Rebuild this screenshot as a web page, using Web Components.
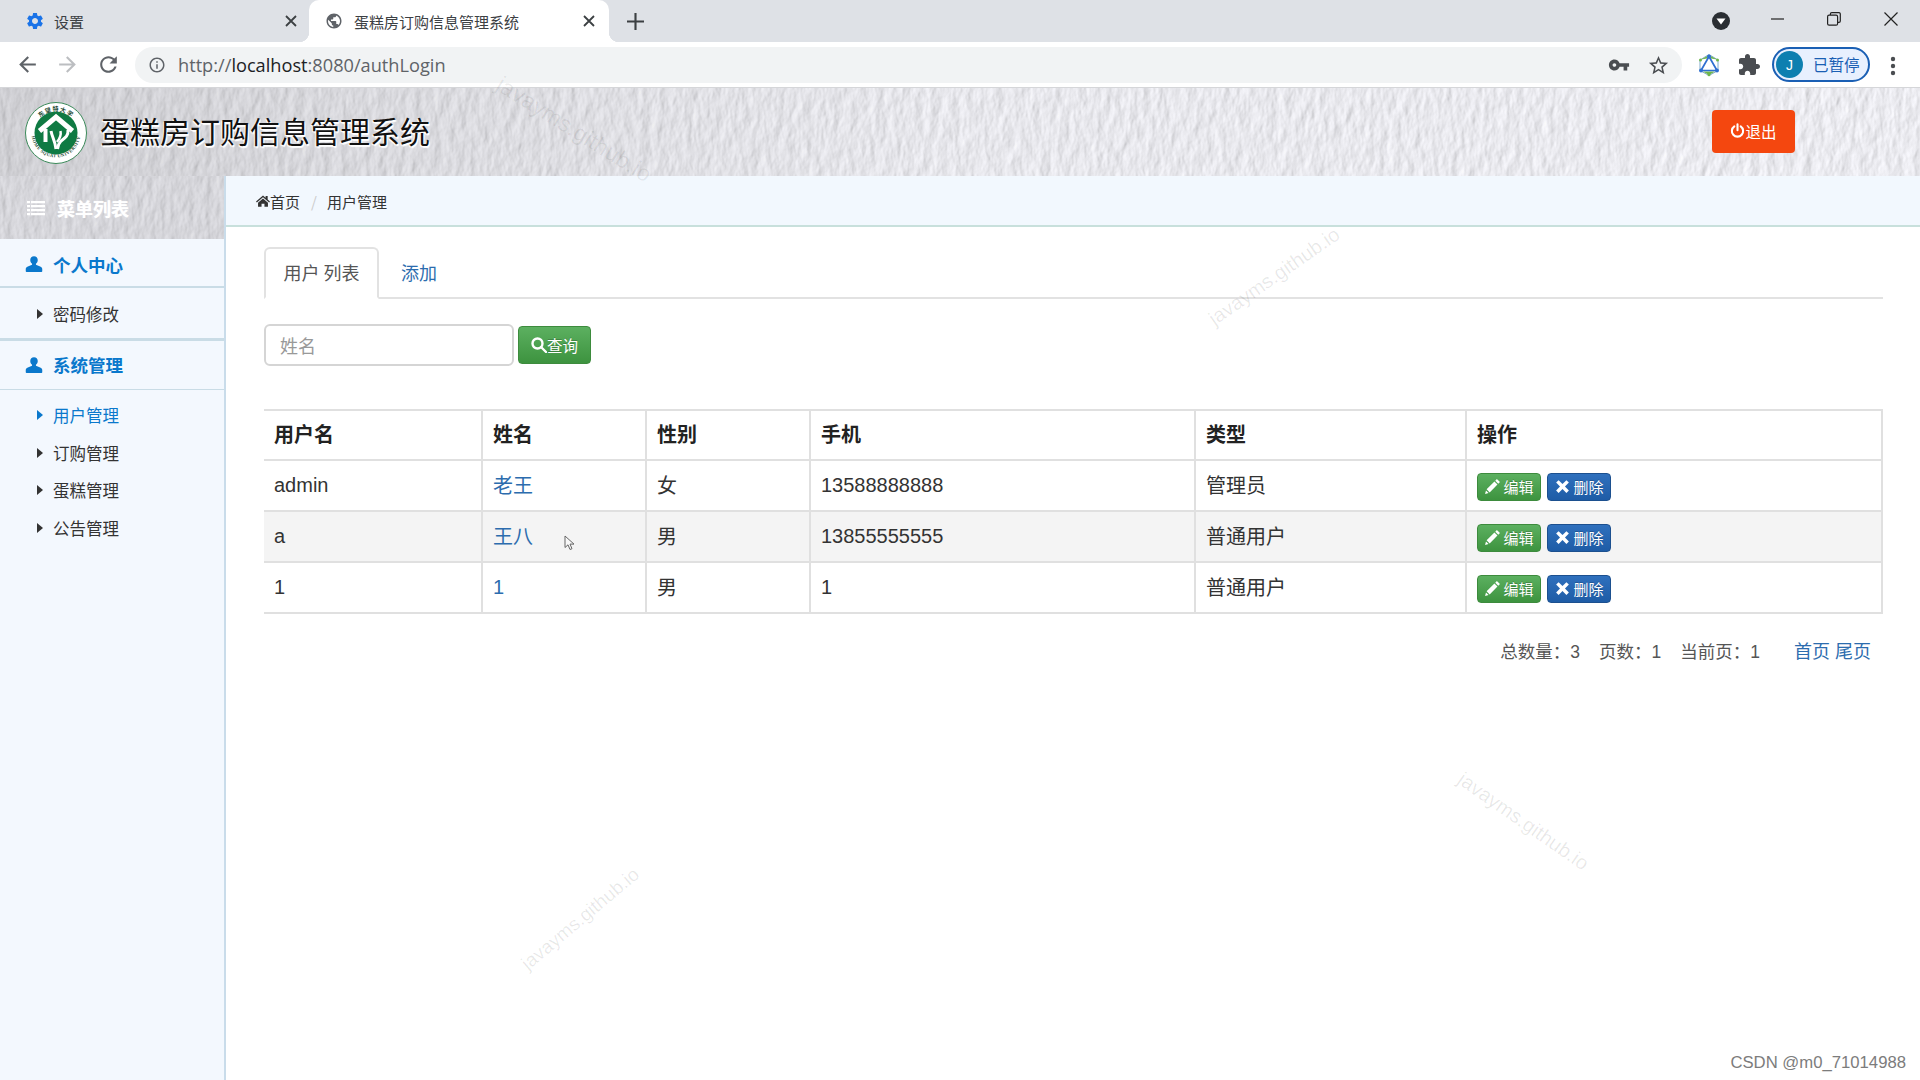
<!DOCTYPE html>
<html lang="zh">
<head>
<meta charset="utf-8">
<title>蛋糕房订购信息管理系统</title>
<style>
  html, body { margin: 0; height: 100%; background: #fff; overflow: hidden; }
  body { font-family: "Liberation Sans", "Noto Sans CJK SC", sans-serif; color: #333; position: relative; }
  .shell { display: flex; flex-direction: column; height: 1080px; }
  .work { display: flex; flex: 1; min-height: 0; }
</style>
</head>
<body>
<div class="shell">
  <browser-chrome></browser-chrome>
  <app-header></app-header>
  <div class="work">
    <app-sidebar>
      <side-group label="个人中心">
        <side-item>密码修改</side-item>
      </side-group>
      <side-group label="系统管理" open>
        <side-item active>用户管理</side-item>
        <side-item>订购管理</side-item>
        <side-item>蛋糕管理</side-item>
        <side-item>公告管理</side-item>
      </side-group>
    </app-sidebar>
    <app-main>
      <bread-crumb slot="crumb"></bread-crumb>
      <nav-tabs></nav-tabs>
      <search-bar></search-bar>
      <user-table>
        <user-row head username="用户名" fullname="姓名" gender="性别" phone="手机" kind="类型" ops="操作"></user-row>
        <user-row username="admin" fullname="老王" gender="女" phone="13588888888" kind="管理员"></user-row>
        <user-row striped username="a" fullname="王八" gender="男" phone="13855555555" kind="普通用户"></user-row>
        <user-row username="1" fullname="1" gender="男" phone="1" kind="普通用户"></user-row>
      </user-table>
      <page-info></page-info>
    </app-main>
  </div>
</div>
<water-mark style="left:485px;top:116px;transform:rotate(32deg);color:rgba(0,0,0,.07);font-size:23px"></water-mark>
<water-mark style="left:1197px;top:265px;transform:rotate(-35deg)"></water-mark>
<water-mark style="left:1446px;top:810px;transform:rotate(35deg)"></water-mark>
<water-mark style="left:507px;top:908px;transform:rotate(-40deg);font-size:19px"></water-mark>
<mouse-cursor></mouse-cursor>
<csdn-mark>CSDN @m0_71014988</csdn-mark>

<script>
(function () {
  const P = {
    back: 'M20 11H7.83l5.59-5.59L12 4l-8 8 8 8 1.41-1.41L7.83 13H20v-2z',
    forward: 'M4 11h12.17l-5.59-5.59L12 4l8 8-8 8-1.41-1.41L16.17 13H4v-2z',
    reload: 'M17.65 6.35C16.2 4.9 14.21 4 12 4c-4.42 0-7.99 3.58-7.99 8s3.57 8 7.99 8c3.73 0 6.84-2.55 7.73-6h-2.08c-.82 2.33-3.04 4-5.65 4-3.31 0-6-2.69-6-6s2.69-6 6-6c1.66 0 3.14.69 4.22 1.78L13 11h7V4l-2.35 2.35z',
    info: 'M11 7h2v2h-2zm0 4h2v6h-2zm1-9C6.48 2 2 6.48 2 12s4.48 10 10 10 10-4.48 10-10S17.52 2 12 2zm0 18c-4.41 0-8-3.59-8-8s3.59-8 8-8 8 3.59 8 8-3.59 8-8 8z',
    key: 'M12.65 10C11.83 7.67 9.61 6 7 6c-3.31 0-6 2.69-6 6s2.69 6 6 6c2.61 0 4.83-1.67 5.65-4H17v4h4v-4h2v-4H12.65zM7 14c-1.1 0-2-.9-2-2s.9-2 2-2 2 .9 2 2-.9 2-2 2z',
    star: 'M22 9.24l-7.19-.62L12 2 9.19 8.63 2 9.24l5.46 4.73L5.82 21 12 17.27 18.18 21l-1.63-7.03L22 9.24zM12 15.4l-3.76 2.27 1-4.28-3.32-2.88 4.38-.38L12 6.1l1.71 4.04 4.38.38-3.32 2.88 1 4.28L12 15.4z',
    puzzle: 'M20.5 11H19V7c0-1.1-.9-2-2-2h-4V3.5C13 2.12 11.88 1 10.5 1S8 2.12 8 3.5V5H4c-1.1 0-1.99.9-1.99 2v3.8H3.5c1.49 0 2.7 1.21 2.7 2.7s-1.21 2.7-2.7 2.7H2V20c0 1.1.9 2 2 2h3.8v-1.5c0-1.49 1.21-2.7 2.7-2.7 1.49 0 2.7 1.21 2.7 2.7V22H17c1.1 0 2-.9 2-2v-4h1.5c1.38 0 2.5-1.12 2.5-2.5S21.88 11 20.5 11z',
    gear: 'M19.14 12.94c.04-.3.06-.61.06-.94 0-.32-.02-.64-.07-.94l2.03-1.58c.18-.14.23-.41.12-.61l-1.92-3.32c-.12-.22-.37-.29-.59-.22l-2.39.96c-.5-.38-1.03-.7-1.62-.94l-.36-2.54c-.04-.24-.24-.41-.48-.41h-3.84c-.24 0-.43.17-.47.41l-.36 2.54c-.59.24-1.13.57-1.62.94l-2.39-.96c-.22-.08-.47 0-.59.22L2.74 8.87c-.12.21-.08.47.12.61l2.03 1.58c-.05.3-.09.63-.09.94s.02.64.07.94l-2.03 1.58c-.18.14-.23.41-.12.61l1.92 3.32c.12.22.37.29.59.22l2.39-.96c.5.38 1.03.7 1.62.94l.36 2.54c.05.24.24.41.48.41h3.84c.24 0 .44-.17.47-.41l.36-2.54c.59-.24 1.13-.56 1.62-.94l2.39.96c.22.08.47 0 .59-.22l1.92-3.32c.12-.22.07-.47-.12-.61l-2.01-1.58zM12 15.6c-1.98 0-3.6-1.62-3.6-3.6s1.62-3.6 3.6-3.6 3.6 1.62 3.6 3.6-1.62 3.6-3.6 3.6z',
    globe: 'M12 2C6.48 2 2 6.48 2 12s4.48 10 10 10 10-4.48 10-10S17.52 2 12 2zm-1 17.93c-3.95-.49-7-3.85-7-7.93 0-.62.08-1.21.21-1.79L9 15v1c0 1.1.9 2 2 2v1.93zm6.9-2.54c-.26-.81-1-1.39-1.9-1.39h-1v-3c0-.55-.45-1-1-1H8v-2h2c.55 0 1-.45 1-1V7h2c1.1 0 2-.9 2-2v-.41c2.93 1.19 5 4.06 5 7.41 0 2.08-.8 3.97-2.1 5.39z',
    user: 'M12 1.500c-3 0-5 2.200-5 5.200 0 2.200 1 4 2.400 5v1.300L3.800 15.300C2.100 16 1 17 1 18.700V21.500c0 .6.500 1 1 1h20c.5 0 1-.4 1-1v-2.800c0-1.700-1.100-2.700-2.800-3.400l-5.600-2.300v-1.300c1.400-1 2.400-2.800 2.400-5 0-3-2-5.200-5-5.200z',
    home: 'M12 2.500 0 13l1.500 1.700L12 5.600l10.500 9.100L24 13l-4-3.500V3.500h-3.500v3L12 2.500zM12 7.500 3.500 14.800V22h6v-5.500h5V22h6v-7.200L12 7.500z',
    pencil: 'M18.200 1.500l4.300 4.300-2.300 2.300-4.300-4.300 2.300-2.300zM14.700 5 19 9.300 8 20.300 3.700 16 14.700 5zM2.800 17.500l3.700 3.700L1.500 22.500l1.300-5z',
    cross: 'M6.500 3 12 8.500 17.500 3 21 6.500 15.500 12 21 17.500 17.500 21 12 15.500 6.500 21 3 17.500 8.500 12 3 6.500z'
  }

  function icon (name, size, color) {
    return `<svg width="${size}" height="${size}" viewBox="0 0 24 24" fill="${color || 'currentColor'}" style="display:block;flex:none"><path d="${P[name]}"/></svg>`
  }

  function define (name, html, init) {
    let template = document.createElement('template')
    template.innerHTML = html
    customElements.define(name, class extends HTMLElement {
      constructor () {
        super()
        this.attachShadow({ mode: 'open' }).appendChild(template.content.cloneNode(true))
      }
      connectedCallback () {
        if (init) init(this, this.shadowRoot)
      }
    })
  }

  define('browser-chrome', `
    <style>
      :host { display: block; flex: none; font-family: "Noto Sans CJK SC", "Liberation Sans", sans-serif; color: #3c4043; }
      .strip { height: 42px; background: #dee1e6; display: flex; align-items: flex-end; position: relative; }
      .tab { height: 42px; box-sizing: border-box; display: flex; align-items: center; font-size: 15px; position: relative; flex: none; }
      .tab.one { width: 309px; padding-left: 25px; }
      .tab.two { width: 300px; padding-left: 16px; background: #fff; border-radius: 10px 10px 0 0; }
      .tab.two::before, .tab.two::after { content: ''; position: absolute; bottom: 0; width: 10px; height: 10px; }
      .tab.two::before { left: -10px; background: radial-gradient(circle at 0 0, #dee1e6 10px, #fff 10.5px); }
      .tab.two::after { right: -10px; background: radial-gradient(circle at 100% 0, #dee1e6 10px, #fff 10.5px); }
      .tab .t { margin-left: 9px; }
      .tab.two .t { margin-left: 11px; }
      .x { position: absolute; right: 14px; top: 15px; }
      .tab.one .x { right: 12px; }
      .plus { margin: 0 0 12px 18px; }
      .bar { height: 46px; background: #fff; display: flex; align-items: center; border-bottom: 1px solid #d5d6d9; box-sizing: border-box; padding-left: 15px; }
      .addr { margin-left: 14px; width: 1547px; height: 36px; background: #f1f3f4; border-radius: 18px; display: flex; align-items: center; box-sizing: border-box; padding-left: 13px; flex: none; position: relative; }
      .url { font: 18.200px "Open Sans", sans-serif; color: #5f6368; margin-left: 12px; }
      .url b { font-weight: 400; color: #202124; }
      .ab { position: absolute; top: 7px; }
      .pill { position: absolute; width: 98px; height: 35px; box-sizing: border-box; border: 2px solid #1a5fb4; border-radius: 18px; background: #e8f0fe; display: flex; align-items: center; padding-left: 2px; color: #1a5fb4; font-size: 15.500px; line-height: 28px; }
      .pill em { font-style: normal; position: relative; top: -1px; }
      .av { width: 27px; height: 27px; border-radius: 50%; background: #0d7fb0; color: #fff; font: 14px "Liberation Sans", sans-serif; display: flex; align-items: center; justify-content: center; margin-right: 10px; }
      .tool { position: absolute; }
      .rel { position: relative; }
    </style>
    <div class="strip">
      <div class="tab one">${icon('gear', 20, '#1a73e8')}<span class="t">设置</span>
        <svg class="x" width="12" height="12" viewBox="0 0 12 12" stroke="#3c4043" stroke-width="1.800"><path d="M1 1l10 10M11 1 1 11"/></svg>
      </div>
      <div class="tab two">${icon('globe', 18, '#5f6368')}<span class="t">蛋糕房订购信息管理系统</span>
        <svg class="x" width="12" height="12" viewBox="0 0 12 12" stroke="#3c4043" stroke-width="1.800"><path d="M1 1l10 10M11 1 1 11"/></svg>
      </div>
      <svg class="plus" width="17" height="17" viewBox="0 0 16 16" stroke="#3c4043" stroke-width="2"><path d="M8 0v16M0 8h16"/></svg>
      <svg class="tool" style="left:1712px;top:12px" width="18" height="18" viewBox="0 0 18 18"><circle cx="9" cy="9" r="9" fill="#2a2e33"/><path d="M4.500 6.500h9L9 12.500z" fill="#fff"/></svg>
      <svg class="tool" style="left:1771px;top:18px" width="13" height="2" viewBox="0 0 13 2"><path d="M0 1h13" stroke="#222" stroke-width="1.200"/></svg>
      <svg class="tool" style="left:1827px;top:12px" width="14" height="14" viewBox="0 0 14 14" fill="none" stroke="#222" stroke-width="1.200"><rect x=".6" y="3.200" width="10" height="10" rx="1.500"/><path d="M3.400 3V2A1.400 1.400 0 0 1 4.800.6h7A1.400 1.400 0 0 1 13.300 2v7a1.400 1.400 0 0 1-1.400 1.400H11"/></svg>
      <svg class="tool" style="left:1884px;top:12px" width="14" height="14" viewBox="0 0 14 14" stroke="#222" stroke-width="1.200"><path d="M.5.500l13 13M13.500.500l-13 13"/></svg>
    </div>
    <div class="bar rel">
      ${icon('back', 25, '#5f6368')}
      <span style="width:15px"></span>${icon('forward', 25, '#bcbec1')}
      <span style="width:16px"></span>${icon('reload', 25, '#5f6368')}
      <div class="addr">
        ${icon('info', 18, '#5f6368')}
        <span class="url">http://<b>localhost</b>:8080/authLogin</span>
        <span class="ab" style="left:1473px">${icon('key', 22, '#4a4d51')}</span>
        <span class="ab" style="left:1512px">${icon('star', 23, '#4a4d51')}</span>
      </div>
      <svg class="tool" style="left:1697px;top:11px" width="24" height="24" viewBox="0 0 24 24" fill="none">
        <path d="M12 1.500 21 7v10.500L12 22.500 3 17.500V7z" stroke="#7faacb" stroke-width="1"/>
        <path d="M4 6.500 12 2 10 5.500zM20 6.500 12 2l2 3.500zM6 18.500l6 3.500 6-3.500z" fill="#6fb64a"/>
        <path d="M12 3.500 20 17.500H4z" stroke="#2f6fd0" stroke-width="1.700"/>
        <circle cx="12" cy="3.500" r="2" fill="#2f6fd0"/><circle cx="3.500" cy="7" r="1.500" fill="#6fb64a"/><circle cx="20.500" cy="7" r="1.500" fill="#6fb64a"/><circle cx="4" cy="17.500" r="1.900" fill="#2f6fd0"/><circle cx="20" cy="17.500" r="1.900" fill="#2f6fd0"/><circle cx="12" cy="21.800" r="1.500" fill="#6fb64a"/>
      </svg>
      <span class="tool" style="left:1737px;top:11px">${icon('puzzle', 24, '#4a4d51')}</span>
      <span class="tool" style="left:1772px;top:5px;width:98px;height:35px;">
        <span class="pill"><span class="av">J</span><em>已暂停</em></span>
      </span>
      <svg class="tool" style="left:1889px;top:14px" width="8" height="20" viewBox="0 0 8 20" fill="#4a4d51"><circle cx="4" cy="3" r="2.200"/><circle cx="4" cy="10" r="2.200"/><circle cx="4" cy="17" r="2.200"/></svg>
    </div>
  `)

  define('paper-texture', `
    <style>
      :host { position: absolute; inset: 0; display: block; overflow: hidden; z-index: 0; }
      svg { display: block; width: 100%; height: 100%; }
      .shade { position: absolute; inset: 0; }
    </style>
    <svg aria-hidden="true">
      <filter id="paper" x="0" y="0" width="100%" height="100%" color-interpolation-filters="sRGB">
        <feTurbulence type="fractalNoise" baseFrequency=".11 .055" numOctaves="4" seed="7"/>
        <feDiffuseLighting surfaceScale=".75" lighting-color="#ececf1" diffuseConstant="1.100">
          <feDistantLight azimuth="200" elevation="66"/>
        </feDiffuseLighting>
      </filter>
      <rect width="100%" height="100%" filter="url(#paper)"/>
    </svg>
    <div class="shade"></div>
  `, (el, root) => {
    root.querySelector('.shade').style.background = el.getAttribute('shade') || 'none'
  })

  define('app-header', `
    <style>
      :host { display: flex; flex: none; height: 88px; align-items: center; position: relative; }
      .logo { position: relative; z-index: 1; margin: 2px 0 0 25px; display: block; flex: none; }
      h1 { position: relative; z-index: 1; margin: 0 0 4px 13px; font: 400 30px/1 "Noto Sans CJK SC", sans-serif; color: #111; text-shadow: 1px 1px 1px #fff, -1px 1px 1px #fff, 1px 2px 1px #fff; }
      .quit { position: absolute; z-index: 1; left: 1712px; top: 22px; width: 83px; height: 43px; padding-bottom: 2px; box-sizing: border-box; background: #f4470f; border-radius: 4px; color: #fff; display: flex; align-items: center; justify-content: center; font: 15.500px "Noto Sans CJK SC", sans-serif; }
    </style>
    <paper-texture shade="linear-gradient(90deg, rgba(120,120,122,.26), rgba(120,120,122,.15) 25%, rgba(120,120,122,.05) 50%, rgba(120,120,122,.02) 100%)"></paper-texture>
    <svg class="logo" width="62" height="62" viewBox="0 0 62 62">
      <circle cx="31" cy="31" r="30.500" fill="#fff" stroke="#3b8a5a"/>
      <circle cx="31" cy="31" r="21.500" fill="#0f7a43"/>
      <g fill="none" stroke="#fff" stroke-linejoin="miter">
        <path d="M14.500 29 31 15l16.500 14" stroke-width="5"/>
        <path d="M20.500 27v13" stroke-width="4"/>
        <path d="M26 29c1 6 4 9 5 18" stroke-width="3"/>
        <path d="M35.500 29c1 5-1 8-3.500 11" stroke-width="2.500"/>
        <path d="M43 28c.5 6-3 8-7 11-2 2-3 4-3.500 8" stroke-width="3"/>
      </g>
      <defs>
        <path id="bt" d="M6.500 31a24.500 24.500 0 0 0 49 0"/>
        <path id="tp" d="M9 27a22.500 22.500 0 0 1 44 0"/>
      </defs>
      <text font-size="4.600" font-family="Liberation Serif, serif" font-weight="700" fill="#1d4a33" letter-spacing=".4"><textPath href="#bt" startOffset="50%" text-anchor="middle">HOME SQUAT UNIVERSITY</textPath></text>
      <text font-size="6" font-family="Noto Sans CJK SC, sans-serif" font-weight="700" fill="#1d4a33" letter-spacing="1"><textPath href="#tp" startOffset="50%" text-anchor="middle">东望特大学</textPath></text>
    </svg>
    <h1>蛋糕房订购信息管理系统</h1>
    <div class="quit">
      <svg width="15" height="15" viewBox="0 0 16 16" fill="none" stroke="#fff" stroke-width="2.200" stroke-linecap="round"><path d="M4.600 3.600a6 6 0 1 0 6.800 0M8 1.300v6.500"/></svg>退出
    </div>
  `)

  define('app-sidebar', `
    <style>
      :host { display: block; flex: none; width: 226px; box-sizing: border-box; border-right: 2px solid #c9dcea; background: #f3f8fe; }
      .head { height: 63px; position: relative; display: flex; align-items: center; padding-left: 27px; color: #fff; font: 700 18px "Noto Sans CJK SC", sans-serif; text-shadow: 0 0 1px rgba(255,255,255,.7); }
      .head > span, .head > svg { position: relative; z-index: 1; }
      .head svg { margin-right: 12px; }
    </style>
    <div class="head">
      <paper-texture shade="linear-gradient(rgba(120,120,124,.2), rgba(120,120,124,.2))"></paper-texture>
      <svg width="18" height="16" viewBox="0 0 18 16" fill="#fff"><path d="M0 1h3v2.200H0zM4 1h14v2.200H4zM0 5h3v2.200H0zM4 5h14v2.200H4zM0 9h3v2.200H0zM4 9h14v2.200H4zM0 13h3v2.200H0zM4 13h14v2.200H4z"/></svg>
      <span>菜单列表</span>
    </div>
    <slot></slot>
  `)

  define('side-group', `
    <style>
      :host { display: block; font-family: "Noto Sans CJK SC", sans-serif; }
      .title { height: 49px; box-sizing: border-box; padding-top: 3px; border-bottom: 2px solid #c9dce6; display: flex; align-items: center; padding-left: 26px; color: #0a78cc; font-size: 17.500px; font-weight: 700; }
      .title svg { margin: 0 10px 0 -1px; }
      .items { display: block; padding: 7.500px 0 4.500px; box-sizing: border-box; border-bottom: 3px solid #c9dce6; }
      :host([open]) .items { border-bottom: 0; padding-top: 7px; }
      :host([open]) .title { border-bottom-width: 1px; padding-top: 0; }
    </style>
    <div class="title">${icon('user', 18)}<span class="label"></span></div>
    <div class="items"><slot></slot></div>
  `, (el, root) => {
    root.querySelector('.label').textContent = el.getAttribute('label')
  })

  define('side-item', `
    <style>
      :host { display: flex; align-items: center; height: 37.500px; padding-left: 37px; font-size: 16.500px; color: #333; }
      :host([active]) { color: #0a78cc; }
      i { width: 0; height: 0; border-left: 6px solid currentColor; border-top: 5.500px solid transparent; border-bottom: 5.500px solid transparent; margin-right: 10px; }
    </style>
    <i></i><slot></slot>
  `)

  define('app-main', `
    <style>
      :host { display: block; flex: 1; min-width: 0; background: #fff; font-family: "Liberation Sans", "Noto Sans CJK SC", sans-serif; }
      .body { padding: 20px 37px 0 38px; }
    </style>
    <slot name="crumb"></slot>
    <div class="body"><slot></slot></div>
  `)

  define('bread-crumb', `
    <style>
      :host { display: flex; align-items: center; height: 51px; box-sizing: border-box; padding: 1px 0 0 30px; background: #f2f8fe; border-bottom: 2px solid #c8e0dc; font: 15px "Noto Sans CJK SC", sans-serif; color: #333; }
      .sep { color: #ccc; margin: 0 10px 0 11px; }
    </style>
    ${icon('home', 14)}<span>首页</span><span class="sep">/</span><span>用户管理</span>
  `)

  define('nav-tabs', `
    <style>
      :host { display: flex; height: 52px; box-sizing: border-box; border-bottom: 2px solid #e2e2e2; font: 18px "Noto Sans CJK SC", sans-serif; }
      div { box-sizing: border-box; height: 52px; display: flex; align-items: center; padding-bottom: 2px; }
      .on { width: 115px; justify-content: center; border: 2px solid #e2e2e2; border-bottom: 2px solid #fff; border-radius: 6px 6px 0 0; color: #555; white-space: pre; }
      .off { margin-left: 22px; color: #2c6cae; }
    </style>
    <div class="on">用户 列表</div><div class="off">添加</div>
  `)

  define('search-bar', `
    <style>
      :host { display: flex; align-items: center; margin-top: 25px; height: 42px; font-family: "Noto Sans CJK SC", sans-serif; }
      input { box-sizing: border-box; width: 250px; height: 42px; padding: 0 14px; border: 2px solid #d5d5d5; border-radius: 6px; font: 18px "Noto Sans CJK SC", sans-serif; outline: 0; }
      input::placeholder { color: #999; opacity: 1; }
      .go { margin-left: 4px; width: 73px; height: 38px; box-sizing: border-box; border: 1px solid #3d8b3d; border-radius: 4px; background: linear-gradient(#5cb060, #3d933f); color: #fff; display: flex; align-items: center; justify-content: center; font-size: 15.500px; text-shadow: 0 -1px 0 rgba(0,0,0,.2); }
    </style>
    <input placeholder="姓名">
    <div class="go">
      <svg width="16" height="16" viewBox="0 0 16 16" fill="none" stroke="#fff" stroke-width="2.400"><circle cx="6.500" cy="6.500" r="5"/><path d="M10 10l5 5" stroke-linecap="round"/></svg>查询
    </div>
  `)

  define('user-table', `
    <style>
      :host { display: block; margin-top: 43px; border-top: 2px solid #e0e0e0; }
    </style>
    <slot></slot>
  `)

  define('user-row', `
    <style>
      :host { display: grid; grid-template-columns: 219px 164px 164px 385px 271px 416px; height: 51px; font-size: 20px; color: #333; }
      :host([head]) { height: 50px; font-weight: 700; color: #222; }
      :host([striped]) { background: #f4f4f4; }
      .c { box-sizing: border-box; border-right: 2px solid #e0e0e0; border-bottom: 2px solid #e0e0e0; padding-left: 10px; display: flex; align-items: center; white-space: nowrap; }
      .c:first-child { border-left: 2px solid #e0e0e0; padding-left: 10px; }
      .c.cjk { padding-bottom: 3px; }
      .c.link { color: #2c6cae; }
      .b { width: 64px; height: 28px; box-sizing: border-box; border-radius: 4px; color: #fff; font: 15px "Noto Sans CJK SC", sans-serif; display: inline-flex; align-items: center; justify-content: center; gap: 2px; margin: 2px 6px 0 0; text-shadow: 0 -1px 0 rgba(0,0,0,.2); }
      .g { background: linear-gradient(#5cb060, #3d933f); border: 1px solid #3d8b3d; }
      .p { background: linear-gradient(#2f70bd, #1e5ca6); border: 1px solid #1c508f; }
    </style>
  `, (el, root) => {
    const head = el.hasAttribute('head')
    const a = n => el.getAttribute(n)
    const cjk = s => /[^\x00-\x7f]/.test(s) ? 'cjk' : ''
    let ops = head ? a('ops') : `<span class="b g">${icon('pencil', 17)}编辑</span><span class="b p">${icon('cross', 17)}删除</span>`
    let wrap = document.createElement('template')
    wrap.innerHTML = `
      <div class="c ${cjk(a('username'))}">${a('username')}</div>
      <div class="c ${head ? '' : 'link'} ${cjk(a('fullname'))}">${a('fullname')}</div>
      <div class="c cjk">${a('gender')}</div>
      <div class="c ${cjk(a('phone'))}">${a('phone')}</div>
      <div class="c cjk">${a('kind')}</div>
      <div class="c ${head ? 'cjk' : ''}">${ops}</div>`
    root.appendChild(wrap.content)
  })

  define('page-info', `
    <style>
      :host { display: flex; justify-content: flex-end; align-items: center; height: 24px; margin-top: 24px; padding-right: 12px; font: 17.500px "Liberation Sans", "Noto Sans CJK SC", sans-serif; color: #555; white-space: pre; }
      span { margin-right: 19px; }
      a { color: #2c6cae; font-size: 18px; }
      .l { margin-left: 15px; }
    </style>
    <span>总数量：3</span><span>页数：1</span><span>当前页：1</span><a class="l">首页 尾页</a>
  `)

  define('water-mark', `
    <style>
      :host { position: absolute; display: block; font: 20px "Liberation Sans", sans-serif; color: rgba(0,0,0,.09); white-space: nowrap; pointer-events: none; }
    </style>
    javayms.github.io
  `)

  define('mouse-cursor', `
    <style>
      :host { position: absolute; left: 564px; top: 535px; display: block; }
      svg { display: block; }
    </style>
    <svg width="11" height="16" viewBox="0 0 11 16"><path d="M1 1v11.500l3-2.700 2 4.700 2-.8-2-4.600h4z" fill="#f8f8f8" stroke="#666"/></svg>
  `)

  define('csdn-mark', `
    <style>
      :host { position: absolute; right: 14px; top: 1053px; display: block; font: 16.700px "Liberation Sans", sans-serif; color: #7c7c7c; text-shadow: 0 0 2px #fff; }
    </style>
    <slot></slot>
  `)
})()
</script>
</body>
</html>
